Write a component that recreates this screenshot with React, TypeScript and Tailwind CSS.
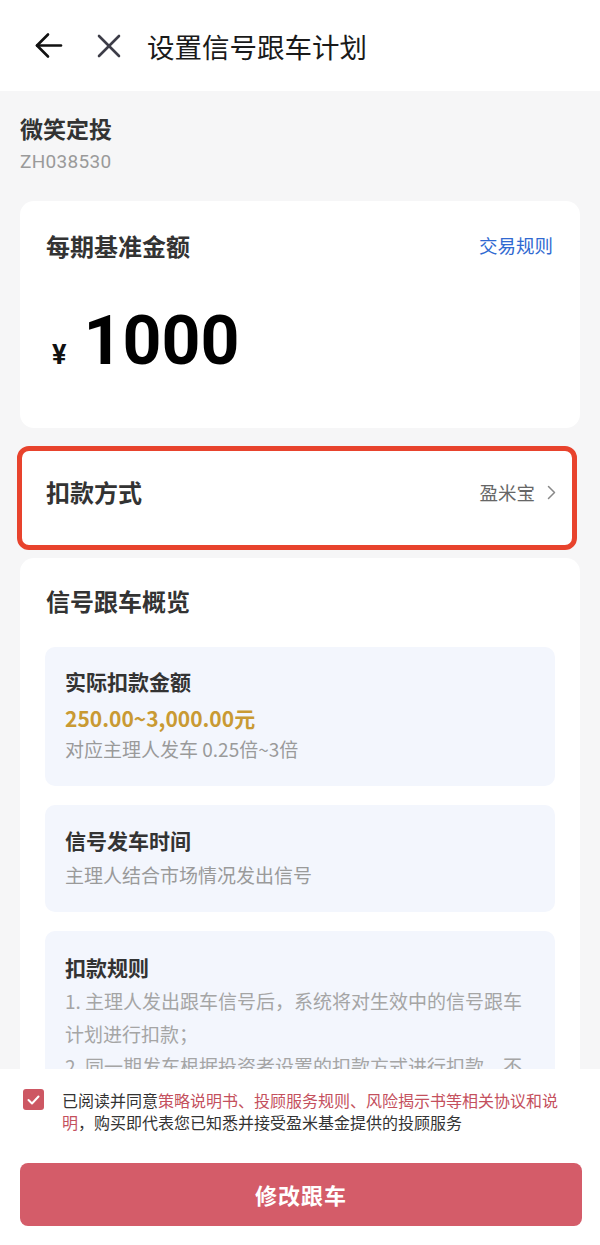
import React, { useState } from 'react';

const FONT = { fontFamily: '"Noto Sans CJK SC", "Noto Sans", Roboto, sans-serif' };

export default function App() {
  const [agreed, setAgreed] = useState(true);

  return (
    <div className="h-[1245px] w-[600px] flex flex-col bg-[#f6f6f7] overflow-hidden" style={FONT}>
      {/* header */}
      <header className="h-[91px] shrink-0 bg-white flex items-center pl-[34px]">
        <svg width="29" height="29" viewBox="0 0 29 29" fill="none" stroke="#111" strokeWidth="2.6" strokeLinecap="round" strokeLinejoin="round">
          <path d="M27 14.5H3" />
          <path d="M14 3.5L3 14.5L14 25.5" />
        </svg>
        <svg className="ml-[34px]" width="24" height="24" viewBox="0 0 24 24" fill="none" stroke="#3d3d48" strokeWidth="2.6" strokeLinecap="round">
          <path d="M2 2L22 22" />
          <path d="M22 2L2 22" />
        </svg>
        <h1 className="ml-[26px] text-[27.5px] leading-[34px] text-[#1a1a1a]">设置信号跟车计划</h1>
      </header>

      {/* content */}
      <main className="flex-1 overflow-hidden">
        <div className="pt-[20px] px-[20px]">
          <div className="text-[23px] leading-[34px] font-bold text-[#333]">微笑定投</div>
          <div className="mt-[6px] text-[19px] leading-[22px] text-[#9a9a9a] tracking-[0.3px]" style={{ fontFamily: 'Roboto, sans-serif' }}>ZH038530</div>
        </div>

        {/* base amount */}
        <section className="mx-[20px] mt-[28px] h-[227px] bg-white rounded-[14px] pt-[30px] px-[26px]">
          <div className="flex items-center justify-between h-[30px]">
            <span className="text-[24px] font-bold text-[#333]">每期基准金额</span>
            <span className="text-[18.5px] text-[#3069d1] mr-[1px]">交易规则</span>
          </div>
          <div className="mt-[46px] flex items-baseline pl-[6px]" style={{ fontFamily: 'Roboto, "Liberation Sans", sans-serif' }}>
            <span className="text-[27px] font-bold text-[#111]">¥</span>
            <span className="ml-[17px] text-[68px] leading-[68px] font-bold text-black">1000</span>
          </div>
        </section>

        {/* payment method (highlighted) */}
        <section className="ml-[17px] w-[560px] mt-[18px] bg-white rounded-[12px] border-[5px] border-[#e8432d] pl-[24px] pr-[16px] pt-[26px] pb-[38px] flex items-center justify-between">
          <span className="text-[24px] leading-[30px] font-bold text-[#333]">扣款方式</span>
          <span className="flex items-center text-[18.5px] leading-[30px] text-[#666]">
            盈米宝
            <svg className="ml-[12px]" width="9" height="15" viewBox="0 0 9 15" fill="none" stroke="#888" strokeWidth="1.5" strokeLinecap="round" strokeLinejoin="round">
              <path d="M1.5 1.5L7.5 7.5L1.5 13.5" />
            </svg>
          </span>
        </section>

        {/* overview */}
        <section className="mx-[20px] mt-[8px] bg-white rounded-[14px] pt-[28px] px-[25px] pb-[30px]">
          <div className="text-[24px] leading-[30px] font-bold text-[#333] pl-[1px]">信号跟车概览</div>

          <div className="mt-[31px] bg-[#f3f6fd] rounded-[10px] pl-[20px] pr-[20px] pt-[20px] pb-[24px]">
            <div className="text-[21px] leading-[28px] font-bold text-[#333]">实际扣款金额</div>
            <div className="mt-[9px] text-[21px] leading-[28px] font-bold text-[#c99a33]">250.00~3,000.00元</div>
            <div className="mt-[4px] text-[19px] leading-[26px] text-[#9a9a9a]">对应主理人发车 0.25倍~3倍</div>
          </div>

          <div className="mt-[19px] bg-[#f3f6fd] rounded-[10px] px-[20px] pt-[21px] pb-[24px]">
            <div className="text-[21px] leading-[28px] font-bold text-[#333]">信号发车时间</div>
            <div className="mt-[8px] text-[19px] leading-[26px] text-[#9a9a9a]">主理人结合市场情况发出信号</div>
          </div>

          <div className="mt-[19px] bg-[#f3f6fd] rounded-[10px] px-[20px] pt-[22px] pb-[24px]">
            <div className="text-[21px] leading-[28px] font-bold text-[#333]">扣款规则</div>
            <p className="mt-[4px] text-[19px] leading-[32.5px] text-[#a5a5a5]">
              1. 主理人发出跟车信号后，系统将对生效中的信号跟车计划进行扣款；
            </p>
            <p className="text-[19px] leading-[32.5px] text-[#a5a5a5]">
              2. 同一期发车根据投资者设置的扣款方式进行扣款，不同扣款方式到账时间可能不同。
            </p>
          </div>
        </section>
      </main>

      {/* footer */}
      <footer className="shrink-0 bg-white pt-[20px] pb-[19px]">
        <div className="flex items-start pl-[23px] pr-[38px]">
          <button
            onClick={() => setAgreed(!agreed)}
            className={`w-[21px] h-[21px] shrink-0 rounded-[3px] flex items-center justify-center ${agreed ? 'bg-[#cd5763]' : 'bg-white border border-[#ccc]'}`}
          >
            {agreed && (
              <svg width="13" height="10" viewBox="0 0 13 10" fill="none" stroke="#fff" strokeWidth="2" strokeLinecap="round" strokeLinejoin="round">
                <path d="M1.5 5L5 8.5L11.5 1.5" />
              </svg>
            )}
          </button>
          <p className="ml-[18px] text-[16px] leading-[22px] text-[#333]">
            已阅读并同意<span className="text-[#c4505d]">策略说明书、投顾服务规则、风险揭示书等相关协议和说明</span>，购买即代表您已知悉并接受盈米基金提供的投顾服务
          </p>
        </div>
        <button className="mt-[30px] mx-[20px] w-[562px] h-[63px] rounded-[8px] bg-[#d45c69] text-white text-[22px] font-bold tracking-[1px]">
          修改跟车
        </button>
      </footer>
    </div>
  );
}
